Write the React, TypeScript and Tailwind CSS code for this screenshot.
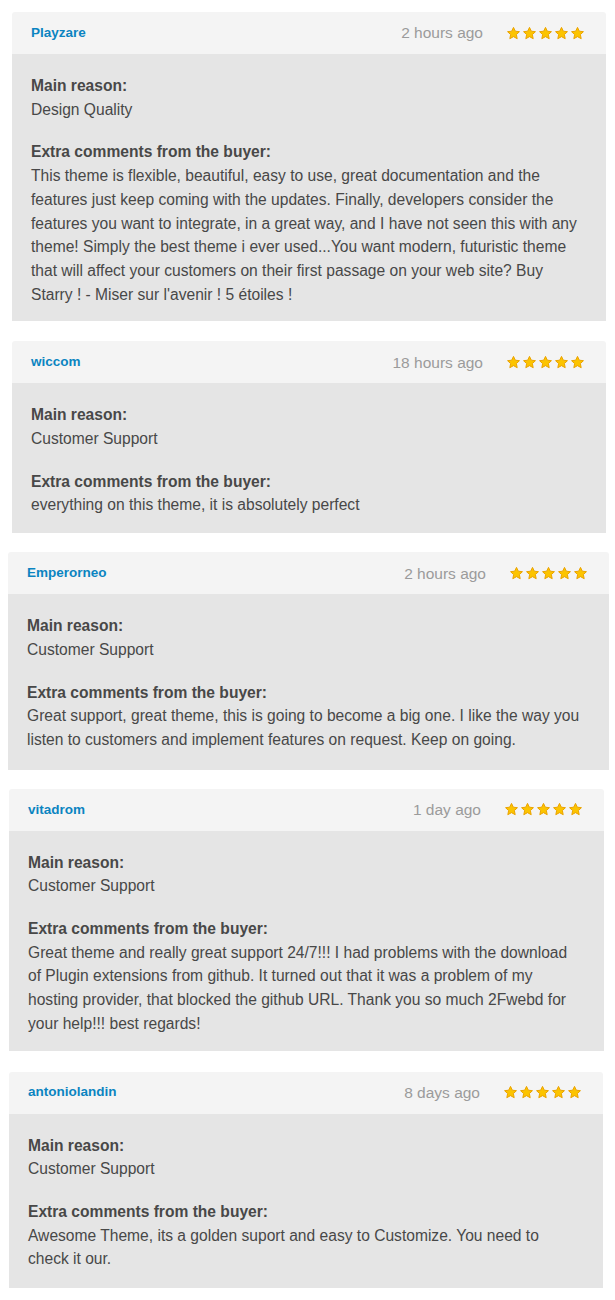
import React from "react";

type Review = {
  name: string;
  time: string;
  reason: string;
  lines: string[];
  cls: string;
  pb: string;
};

const reviews: Review[] = [
  {
    name: "Playzare",
    time: "2 hours ago",
    reason: "Design Quality",
    lines: [
      "This theme is flexible, beautiful, easy to use, great documentation and the",
      "features just keep coming with the updates. Finally, developers consider the",
      "features you want to integrate, in a great way, and I have not seen this with any",
      "theme! Simply the best theme i ever used...You want modern, futuristic theme",
      "that will affect your customers on their first passage on your web site? Buy",
      "Starry ! - Miser sur l'avenir ! 5 étoiles !",
    ],
    cls: "ml-[12px] w-[594px] mt-[12px]",
    pb: "pb-[15px]",
  },
  {
    name: "wiccom",
    time: "18 hours ago",
    reason: "Customer Support",
    lines: ["everything on this theme, it is absolutely perfect"],
    cls: "ml-[12px] w-[594px] mt-[20px]",
    pb: "pb-[16px]",
  },
  {
    name: "Emperorneo",
    time: "2 hours ago",
    reason: "Customer Support",
    lines: [
      "Great support, great theme, this is going to become a big one. I like the way you",
      "listen to customers and implement features on request. Keep on going.",
    ],
    cls: "ml-[8px] w-[601px] mt-[19px]",
    pb: "pb-[18px]",
  },
  {
    name: "vitadrom",
    time: "1 day ago",
    reason: "Customer Support",
    lines: [
      "Great theme and really great support 24/7!!! I had problems with the download",
      "of Plugin extensions from github. It turned out that it was a problem of my",
      "hosting provider, that blocked the github URL. Thank you so much 2Fwebd for",
      "your help!!! best regards!",
    ],
    cls: "ml-[9px] w-[595px] mt-[19px]",
    pb: "pb-[15px]",
  },
  {
    name: "antoniolandin",
    time: "8 days ago",
    reason: "Customer Support",
    lines: [
      "Awesome Theme, its a golden suport and easy to Customize. You need to",
      "check it our.",
    ],
    cls: "ml-[9px] w-[594px] mt-[21px]",
    pb: "pb-[17px]",
  },
];

function Star() {
  return (
    <svg viewBox="0 0 24 24" className="w-[15px] h-[15px]">
      <path
        d="M12 2.2l2.9 6.1 6.6.8-4.9 4.6 1.3 6.6L12 17l-5.9 3.3 1.3-6.6-4.9-4.6 6.6-.8z"
        fill="#fcc400"
        stroke="#eba300"
        strokeWidth="1.6"
        strokeLinejoin="round"
      />
    </svg>
  );
}

function Card({ r }: { r: Review }) {
  return (
    <div className={r.cls}>
      <div className="h-[42px] flex items-center justify-between pl-[19px] pr-[21px] bg-[#f4f4f4] rounded-t-[3px]">
        <span className="text-[13.5px] font-bold text-[#0b84c1]">{r.name}</span>
        <div className="flex items-center gap-[23px]">
          <span className="text-[15.5px] text-[#9b9b9b]">{r.time}</span>
          <div className="flex items-center gap-[1px]">
            <Star />
            <Star />
            <Star />
            <Star />
            <Star />
          </div>
        </div>
      </div>
      <div
        className={`bg-[#e5e5e5] pt-[20px] pl-[19px] pr-[10px] text-[15.6px] leading-[23.7px] text-[#484848] whitespace-nowrap ${r.pb}`}
      >
        <div className="font-bold">Main reason:</div>
        <div>{r.reason}</div>
        <div className="font-bold mt-[19px]">Extra comments from the buyer:</div>
        <div>
          {r.lines.map((l, i) => (
            <div key={i}>{l}</div>
          ))}
        </div>
      </div>
    </div>
  );
}

export default function App() {
  return (
    <div
      className="bg-white w-[615px] min-h-[1300px] pb-[13px]"
      style={{ fontFamily: '"Liberation Sans", Arial, Helvetica, sans-serif' }}
    >
      {reviews.map((r) => (
        <Card key={r.name} r={r} />
      ))}
    </div>
  );
}
